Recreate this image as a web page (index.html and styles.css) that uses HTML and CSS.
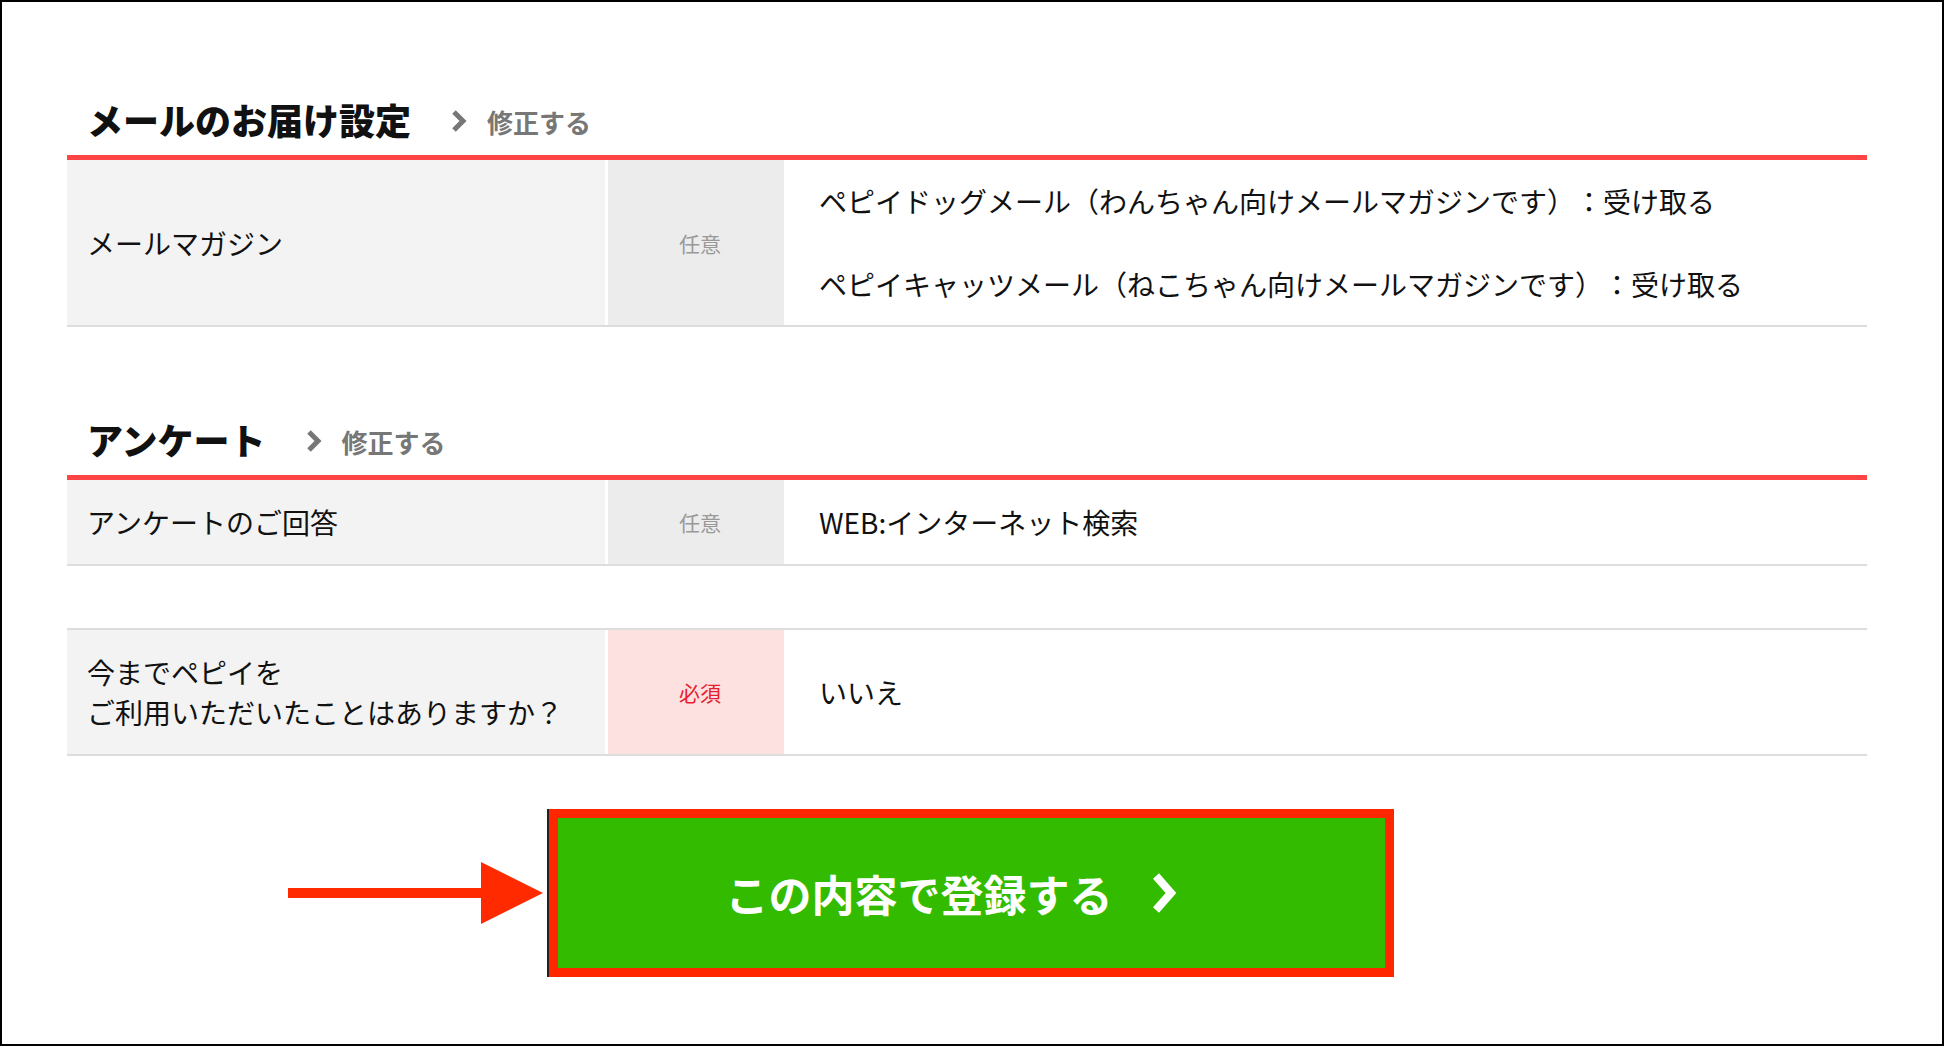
FILE: index.html
```html
<!DOCTYPE html>
<html lang="ja">
<head>
  <meta charset="UTF-8" />
  <meta name="viewport" content="width=device-width, initial-scale=1.0"/>
  <title>登録内容の確認</title>
  <link rel="stylesheet" href="styles.css">
</head>
<body>
  <div class="frame">
    <section class="block">
      <div class="block-head">
        <h2>メールのお届け設定</h2>
        <a class="edit" href="#">
          <svg width="16" height="24" viewBox="0 0 16 24"><polyline points="3,3 12,12 3,21" /></svg>
          修正する
        </a>
      </div>
      <div class="row">
        <div class="label">メールマガジン</div>
        <div class="badge">任意</div>
        <div class="value value-multi">
          <p>ペピイドッグメール（わんちゃん向けメールマガジンです）：受け取る</p>
          <p>ペピイキャッツメール（ねこちゃん向けメールマガジンです）：受け取る</p>
        </div>
      </div>
    </section>

    <section class="block block-survey">
      <div class="block-head">
        <h2>アンケート</h2>
        <a class="edit" href="#">
          <svg width="16" height="24" viewBox="0 0 16 24"><polyline points="3,3 12,12 3,21" /></svg>
          修正する
        </a>
      </div>
      <div class="row">
        <div class="label">アンケートのご回答</div>
        <div class="badge">任意</div>
        <div class="value">WEB:インターネット検索</div>
      </div>
    </section>

    <div class="row row-single">
      <div class="label">今までペピイを<br>ご利用いただいたことはありますか？</div>
      <div class="badge badge-required">必須</div>
      <div class="value">いいえ</div>
    </div>

    <div class="submit">
      <div class="submit-box">
        <svg class="arrow" width="255" height="62" viewBox="0 0 255 62">
          <rect x="0" y="26" width="196" height="10" />
          <polygon points="193,0 255,31 193,62" />
        </svg>
        <button class="submit-btn" type="button">
          この内容で登録する
          <svg width="26" height="42" viewBox="0 0 26 42"><polyline points="5,4 20,21 5,38" /></svg>
        </button>
      </div>
    </div>
  </div>
</body>
</html>
```

FILE: styles.css
```css
* {
  box-sizing: border-box;
}

body {
  margin: 0;
  font-family: "Noto Sans CJK JP", sans-serif;
  color: #111;
  background: #fff;
  text-spacing-trim: space-all;
}

.frame {
  height: 1046px;
  border: 2px solid #000;
  padding: 93px 75px 0 65px;
}

.block-head {
  display: flex;
  align-items: center;
  gap: 40px;
  padding: 0 0 12px 20px;
  border-bottom: 5px solid #ff4444;
}

.block-head h2 {
  margin: 0;
  font-size: 36px;
  line-height: 48px;
  font-weight: 900;
}

.edit {
  display: flex;
  align-items: center;
  gap: 20px;
  margin-top: 4px;
  font-size: 26px;
  font-weight: 700;
  color: #777;
  text-decoration: none;
}

.edit svg polyline {
  fill: none;
  stroke: #777;
  stroke-width: 5;
}

.block-survey {
  margin-top: 88px;
}

.row {
  display: grid;
  grid-template-columns: 538px 176px 1fr;
  column-gap: 3px;
  border-bottom: 2px solid #dddddd;
  font-size: 28px;
  line-height: 40px;
}

.row-single {
  margin-top: 62px;
  border-top: 2px solid #dddddd;
}

.label {
  display: flex;
  align-items: center;
  padding: 22px 20px;
  background: #f3f3f3;
}

.badge {
  display: flex;
  align-items: center;
  justify-content: center;
  padding-left: 8px;
  background: #ececec;
  color: #999;
  font-size: 21px;
}

.badge-required {
  background: #fde0e0;
  color: #e8202c;
}

.value {
  display: flex;
  align-items: center;
  padding: 22px 32px;
}

.value-multi {
  flex-direction: column;
  align-items: flex-start;
  justify-content: center;
  padding: 21px 32px;
}

.value-multi p {
  margin: 0;
}

.value-multi p + p {
  margin-top: 43px;
}

.submit {
  display: flex;
  justify-content: center;
  margin-top: 53px;
  padding-left: 8px;
}

.submit-box {
  position: relative;
}

.arrow {
  position: absolute;
  right: calc(100% + 6px);
  top: 50%;
  transform: translateY(-50%);
  fill: #ff2a00;
}

.submit-btn {
  display: flex;
  align-items: center;
  justify-content: center;
  gap: 38px;
  width: 845px;
  height: 168px;
  padding: 0 40px 0 0;
  border: 9px solid #ff2600;
  background: #33bb00;
  box-shadow: -2px 0 0 #222;
  color: #fff;
  font-family: "Noto Sans CJK JP", sans-serif;
  font-size: 43px;
  font-weight: 700;
  cursor: pointer;
}

.submit-btn polyline {
  fill: none;
  stroke: #fff;
  stroke-width: 8;
}
```
